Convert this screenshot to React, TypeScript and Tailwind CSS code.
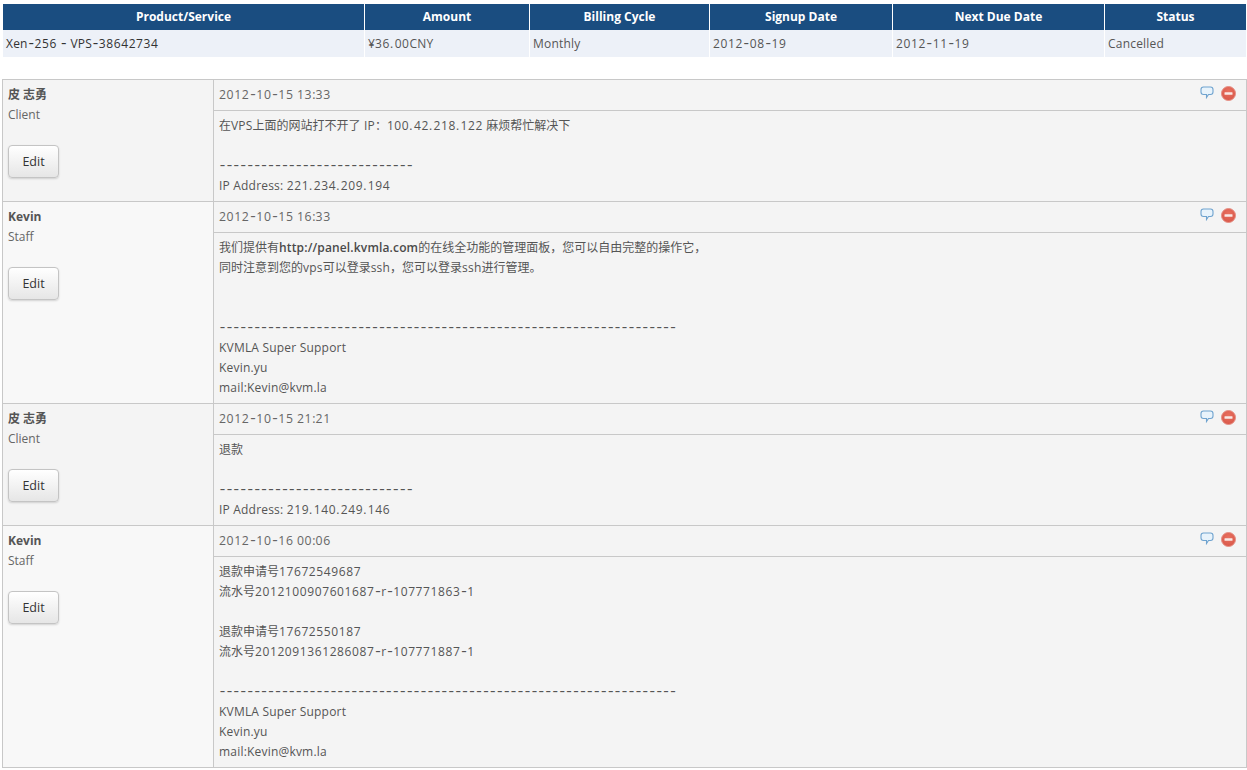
const font = { fontFamily: '"Open Sans", "Noto Sans CJK SC", sans-serif' };

const columns = ["Product/Service", "Amount", "Billing Cycle", "Signup Date", "Next Due Date", "Status"];
const values = ["Xen-256 - VPS-38642734", "¥36.00CNY", "Monthly", "2012-08-19", "2012-11-19", "Cancelled"];

const shortRule = "----------------------------";
const longRule = "------------------------------------------------------------------";

const replies = [
  {
    name: "皮 志勇",
    role: "Client",
    date: "2012-10-15 13:33",
    height: "h-[122px]",
    alt: false,
    lines: ["在VPS上面的网站打不开了 IP：100.42.218.122 麻烦帮忙解决下", "", shortRule, "IP Address: 221.234.209.194"],
  },
  {
    name: "Kevin",
    role: "Staff",
    date: "2012-10-15 16:33",
    height: "h-[202px]",
    alt: true,
    lines: [
      "我们提供有http://panel.kvmla.com的在线全功能的管理面板，您可以自由完整的操作它，",
      "同时注意到您的vps可以登录ssh，您可以登录ssh进行管理。",
      "",
      "",
      longRule,
      "KVMLA Super Support",
      "Kevin.yu",
      "mail:Kevin@kvm.la",
    ],
  },
  {
    name: "皮 志勇",
    role: "Client",
    date: "2012-10-15 21:21",
    height: "h-[122px]",
    alt: false,
    lines: ["退款", "", shortRule, "IP Address: 219.140.249.146"],
  },
  {
    name: "Kevin",
    role: "Staff",
    date: "2012-10-16 00:06",
    height: "h-[241px]",
    alt: true,
    lines: [
      "退款申请号17672549687",
      "流水号2012100907601687-r-107771863-1",
      "",
      "退款申请号17672550187",
      "流水号2012091361286087-r-107771887-1",
      "",
      longRule,
      "KVMLA Super Support",
      "Kevin.yu",
      "mail:Kevin@kvm.la",
    ],
  },
];

// the old page's font has wide digits and long hyphens, so style each kind of run on its own
function Spaced({ text }: { text: string }) {
  const runs = text.match(/http:[\x21-\x7e]+|[\u2E80-\uFFEF]+|\d+|\.(?=\d)|-+|[^\u2E80-\uFFEF\d.-]+|\./g) || [];
  return (
    <>
      {runs.map((run, i) => {
        let cls = "tracking-[0.2px]";
        if (/^[\u2E80-\uFFEF]/.test(run)) cls = "";
        else if (/^\d/.test(run)) cls = "tracking-[0.6px]";
        else if (run === "." && /\d/.test(runs[i + 1] || "")) cls = "tracking-[1.5px]";
        else if (run === "-") cls = "font-['Liberation_Mono'] text-[15px] leading-[0] tracking-[-2.15px] -ml-[1px] mr-[1px]";
        else if (run[0] === "-") cls = "font-['Liberation_Mono'] text-[15px] leading-[0] tracking-[-2.07px] -ml-[1px]";
        else if (run.startsWith("http")) cls = "font-semibold text-[#4a4a4a] tracking-[0.15px]";
        return (
          <span key={i} className={cls}>
            {run}
          </span>
        );
      })}
    </>
  );
}

function ReplyIcon() {
  return (
    <svg width="14" height="13" viewBox="0 0 14 13" className="mt-[-2px]">
      <path
        d="M3.5 1h7C12 1 13 2 13 3.5v2.5C13 7.5 12 8.500 10.500 8.500H8.500L6.500 11.500V8.500H3.500C2 8.500 1 7.500 1 6V3.500C1 2 2 1 3.500 1Z"
        fill="#e8f3fb"
        stroke="#6fa3cf"
        strokeWidth="1.1"
      />
    </svg>
  );
}

function DeleteIcon() {
  return (
    <svg width="15" height="15" viewBox="0 0 15 15">
      <defs>
        <radialGradient id="del" cx="50%" cy="35%" r="65%">
          <stop offset="0%" stopColor="#e8705f" />
          <stop offset="100%" stopColor="#d9584a" />
        </radialGradient>
      </defs>
      <circle cx="7.500" cy="7.500" r="7" fill="url(#del)" stroke="#e58f84" />
      <rect x="3.500" y="6.300" width="8" height="2.400" rx="0.500" fill="#f9e9e6" />
    </svg>
  );
}

function Reply({ name, role, date, height, alt, lines }: (typeof replies)[number]) {
  return (
    <div className={`flex ${height} border-b border-[#c8c8c8] last:border-b-0`}>
      <div className={`w-[211px] shrink-0 border-r border-[#c8c8c8] pl-[5px] pt-[5px] ${alt ? "bg-[#f8f8f8]" : "bg-[#f4f4f4]"}`}>
        <div className="text-[12px] leading-5 font-bold text-[#555]">{name}</div>
        <div className="text-[12px] leading-5 text-[#666]">{role}</div>
        <button className="mt-[20px] h-[33px] w-[51px] rounded-[4px] border border-[#c4c4c4] bg-gradient-to-b from-white to-[#e6e6e6] pt-[1px] text-[12.5px] text-[#333] shadow-[0_1px_2px_rgba(0,0,0,0.15)]">
          Edit
        </button>
      </div>
      <div className="flex min-w-0 flex-1 flex-col bg-[#f4f4f4]">
        <div className="flex h-[31px] shrink-0 items-center justify-between border-b border-[#c8c8c8] pb-[3px] pl-[5px] pr-[10px]">
          <span className="pt-[3px] text-[12.25px] leading-5 text-[#666]">
            <Spaced text={date} />
          </span>
          <span className="flex items-center gap-[7px]">
            <ReplyIcon />
            <DeleteIcon />
          </span>
        </div>
        <div className="pl-[5px] pt-[5px] text-[12px] leading-5 text-[#555]">
          {lines.map((line, i) => (
            <div key={i} className="h-5 whitespace-pre">
              <Spaced text={line} />
            </div>
          ))}
        </div>
      </div>
    </div>
  );
}

export default function App() {
  return (
    <div className="h-[770px] w-[1247px] overflow-hidden bg-white pt-[4px]" style={font}>
      <div className="ml-[3px] w-[1243px]">
        <div className="grid h-[26px] grid-cols-[361px_165px_180px_183px_212px_142px] bg-[#1a4d80]">
          {columns.map((c, i) => (
            <div
              key={c}
              className={`flex items-center justify-center text-[12px] font-bold text-white ${i > 0 ? "border-l border-white" : ""}`}
            >
              {c}
            </div>
          ))}
        </div>
        <div className="grid h-[27px] grid-cols-[361px_165px_180px_183px_212px_142px] bg-[#edf1f8]">
          {values.map((v, i) => (
            <div
              key={v}
              className={`flex items-center pl-[3px] text-[12px] leading-5 ${i === 0 ? "text-[#333]" : "border-l border-white text-[#555]"}`}
            >
              <span className="whitespace-pre">
                <Spaced text={v} />
              </span>
            </div>
          ))}
        </div>
      </div>
      <div className="ml-[2px] mt-[22px] w-[1245px] border border-[#c8c8c8]">
        {replies.map((r, i) => (
          <Reply key={i} {...r} />
        ))}
      </div>
    </div>
  );
}
